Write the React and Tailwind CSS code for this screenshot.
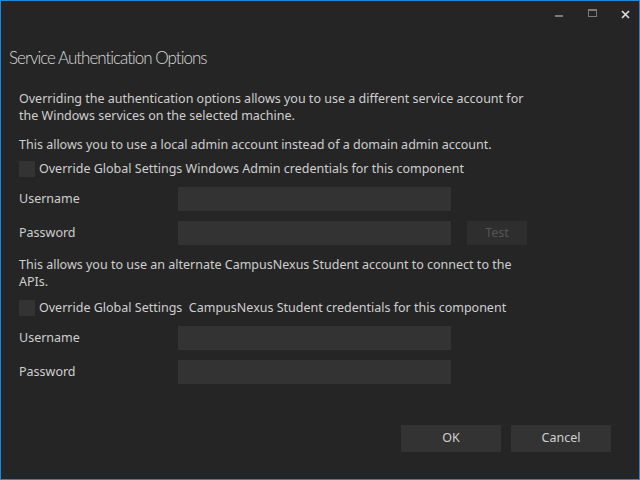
export default function App() {
  const field = 'h-6 w-[273px] bg-[#333333]';
  return (
    <div
      className="w-[640px] h-[480px] bg-[#252525] border border-[#1c8ad8] flex flex-col text-[#cfcfcf] text-[12.5px]"
      style={{ fontFamily: '"Noto Sans", "Open Sans", sans-serif' }}
    >
      {/* title bar */}
      <div className="flex justify-end items-start h-[30px] pr-[9px] pt-[8px] gap-[24px]">
        <svg width="9" height="10" viewBox="0 0 9 10">
          <rect x="0" y="6" width="8" height="2" fill="#7a7a7a" />
        </svg>
        <svg width="9" height="9" viewBox="0 0 9 9">
          <rect x="0.5" y="0.5" width="8" height="7" fill="none" stroke="#7a7a7a" />
          <rect x="0" y="0" width="9" height="2" fill="#7a7a7a" />
        </svg>
        <svg width="9" height="9" viewBox="0 0 9 9" className="mt-[1px]">
          <path d="M1 1 L8 8 M8 1 L1 8" stroke="#e0e0e0" strokeWidth="1.6" />
        </svg>
      </div>

      <h1
        className="pl-[8px] mt-[15px] text-[17px] tracking-[-1px] font-light text-[#d8d8d8] leading-[24px]"
        style={{ fontFamily: 'Lato, "Noto Sans", sans-serif' }}
      >
        Service Authentication Options
      </h1>

      <div className="pl-[18px] mt-[20px] flex flex-col">
        <p className="leading-[17px] w-[510px]">
          Overriding the authentication options allows you to use a different service account for the Windows services on the selected machine.
        </p>
        <p className="mt-[12px] leading-[17px]">This allows you to use a local admin account instead of a domain admin account.</p>

        <label className="mt-[8px] flex items-center gap-[4px] h-[16px]">
          <span className="w-4 h-4 bg-[#333333]" />
          <span>Override Global Settings Windows Admin credentials for this component</span>
        </label>

        <div className="mt-[10px] flex items-center">
          <span className="w-[159px]">Username</span>
          <div className={field} />
        </div>
        <div className="mt-[10px] flex items-center">
          <span className="w-[159px]">Password</span>
          <div className={field} />
          <button className="ml-4 w-[60px] h-6 bg-[#2e2e2e] text-[#555555]">Test</button>
        </div>

        <p className="mt-[11px] leading-[17px] w-[510px]">
          This allows you to use an alternate CampusNexus Student account to connect to the APIs.
        </p>

        <label className="mt-[10px] flex items-center gap-[4px] h-[16px]">
          <span className="w-4 h-4 bg-[#333333]" />
          <span>Override Global Settings&nbsp; CampusNexus Student credentials for this component</span>
        </label>

        <div className="mt-[10px] flex items-center">
          <span className="w-[159px]">Username</span>
          <div className={field} />
        </div>
        <div className="mt-[10px] flex items-center">
          <span className="w-[159px]">Password</span>
          <div className={field} />
        </div>
      </div>

      <div className="mt-auto mb-[27px] flex justify-end gap-[10px] pr-[28px]">
        <button className="w-[100px] h-[27px] bg-[#333333] text-[#d0d0d0]">OK</button>
        <button className="w-[100px] h-[27px] bg-[#333333] text-[#d0d0d0]">Cancel</button>
      </div>
    </div>
  );
}
